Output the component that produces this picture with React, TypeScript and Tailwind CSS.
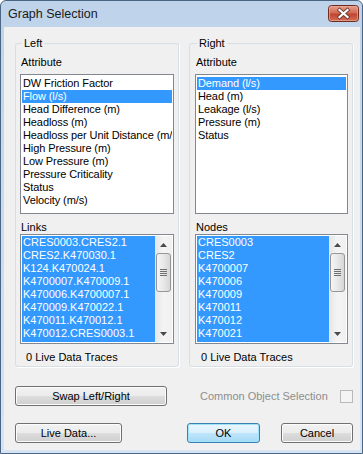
const font = "font-['Liberation_Sans',Arial,sans-serif]";

const leftAttributes = [
  'DW Friction Factor',
  'Flow (l/s)',
  'Head Difference (m)',
  'Headloss (m)',
  'Headloss per Unit Distance (m/s)',
  'High Pressure (m)',
  'Low Pressure (m)',
  'Pressure Criticality',
  'Status',
  'Velocity (m/s)',
];

const rightAttributes = ['Demand (l/s)', 'Head (m)', 'Leakage (l/s)', 'Pressure (m)', 'Status'];

const links = [
  'CRES0003.CRES2.1',
  'CRES2.K470030.1',
  'K124.K470024.1',
  'K4700007.K470009.1',
  'K470006.K4700007.1',
  'K470009.K470022.1',
  'K470011.K470012.1',
  'K470012.CRES0003.1',
];

const nodes = ['CRES0003', 'CRES2', 'K4700007', 'K470006', 'K470009', 'K470011', 'K470012', 'K470021'];

function AttributeList({ items, selected }: { items: string[]; selected: number }) {
  return (
    <div className="h-[140px] overflow-hidden border border-[#828790] bg-white p-[1px]">
      <div className="pt-[1px]">
        {items.map((item, i) => (
          <div
            key={item}
            className={`h-[13px] overflow-hidden whitespace-nowrap pl-[1px] leading-[13px] tracking-[-0.1px] ${
              i === selected ? 'bg-[#3399ff] text-white' : 'text-black'
            }`}
          >
            {item}
          </div>
        ))}
      </div>
    </div>
  );
}

function Arrow({ up }: { up?: boolean }) {
  return (
    <div className="flex h-[17px] items-center justify-center">
      <svg width="7" height="4" viewBox="0 0 7 4">
        <polygon points={up ? '3.5,0 7,4 0,4' : '0,0 7,0 3.5,4'} fill="#4a4a4a" />
      </svg>
    </div>
  );
}

function ScrollBar() {
  return (
    <div className="flex w-[17px] flex-col bg-linear-to-r from-[#e6e6e6] via-[#f4f4f4] to-[#f0f0f0]">
      <Arrow up />
      <div className="mx-[1px] flex h-[39px] flex-col items-center justify-center gap-[1px] rounded-[3px] border border-[#979797] bg-linear-to-r from-[#f5f5f5] via-[#e8e8e8] to-[#d6d6d6]">
        {[0, 1, 2, 3].map((i) => (
          <div key={i} className="h-[1px] w-[7px] bg-[#6f6f6f]" />
        ))}
      </div>
      <div className="flex-1" />
      <Arrow />
    </div>
  );
}

function SelectedList({ items }: { items: string[] }) {
  return (
    <div className="flex h-[110px] overflow-hidden border border-[#828790] bg-white p-[1px]">
      <div className="flex-1 overflow-hidden bg-[#3399ff] text-white">
        {items.map((item) => (
          <div key={item} className="h-[13px] whitespace-nowrap pl-[1px] leading-[13px]">
            {item}
          </div>
        ))}
      </div>
      <ScrollBar />
    </div>
  );
}

function Group(props: {
  title: string;
  attributes: string[];
  selected: number;
  objectLabel: string;
  objects: string[];
  pad: string;
}) {
  return (
    <fieldset className={`min-w-0 rounded-[3px] border border-[#d5dfe5] pb-[2px] shadow-[1px_1px_0_#ffffff] ${props.pad}`}>
      <legend className="ml-[2px] px-[2px] leading-[13px]">{props.title}</legend>
      <div className="pl-[1px] pt-[6px] leading-[13px]">Attribute</div>
      <div className="mt-[5px]">
        <AttributeList items={props.attributes} selected={props.selected} />
      </div>
      <div className="mt-[7px] pl-[1px] leading-[13px]">{props.objectLabel}</div>
      <SelectedList items={props.objects} />
      <div className="mt-[7px] pl-[6px] leading-[13px]">0 Live Data Traces</div>
    </fieldset>
  );
}

function Button({ label, width, primary }: { label: string; width: string; primary?: boolean }) {
  return (
    <button
      className={`h-[20px] ${width} rounded-[3px] border text-[11px] leading-[18px] text-black ${
        primary
          ? 'border-[#3c7fb1] bg-[linear-gradient(to_bottom,#eaf6fd,#d9f0fc_50%,#bee6fd_51%,#a7d9f5)] shadow-[inset_0_0_0_1px_#9fe3fb]'
          : 'border-[#707070] bg-[linear-gradient(to_bottom,#f2f2f2,#ebebeb_50%,#dddddd_51%,#cfcfcf)] shadow-[inset_0_0_0_1px_#fcfcfc]'
      }`}
    >
      {label}
    </button>
  );
}

function CloseButton() {
  return (
    <svg className="mt-[4px] block" width="31" height="17" viewBox="0 0 31 17">
      <defs>
        <linearGradient id="closeFill" x1="0" y1="0" x2="0" y2="1">
          <stop offset="0" stopColor="#e7a493" />
          <stop offset="0.45" stopColor="#d36b56" />
          <stop offset="0.55" stopColor="#c1452e" />
          <stop offset="1" stopColor="#d3735c" />
        </linearGradient>
      </defs>
      <rect x="0.5" y="0.5" width="30" height="16" rx="3" fill="url(#closeFill)" stroke="#6f2b20" />
      <rect x="1.5" y="1.5" width="28" height="14" rx="2" fill="none" stroke="#eda897" strokeOpacity="0.7" />
      <path d="M11.5 5 L19.5 12 M19.5 5 L11.5 12" stroke="#6a3a32" strokeWidth="3.8" strokeLinecap="square" />
      <path d="M11.5 5 L19.5 12 M19.5 5 L11.5 12" stroke="#ffffff" strokeWidth="2.2" strokeLinecap="square" />
    </svg>
  );
}

export default function App() {
  return (
    <div
      className={`flex h-[454px] w-[363px] flex-col rounded-t-[6px] border border-[#4b6584] bg-linear-to-b from-[#bed3ea] to-[#d6e4f3] text-[11px] text-black ${font}`}
    >
      <div className="flex h-[26px] items-start justify-between pl-[7px] pr-[3px]">
        <span className="text-[12.5px] leading-[27px] text-[#1b1b1b]">Graph Selection</span>
        <CloseButton />
      </div>

      <div className="mb-[3px] ml-[3px] mr-[2px] flex flex-1 flex-col bg-[#f0f0f0] pb-[7px] pl-[11px] pr-[7px] pt-[10px]">
        <div className="grid grid-cols-[164px_164px] gap-x-[10px]">
          <Group
            title="Left"
            attributes={leftAttributes}
            selected={1}
            objectLabel="Links"
            objects={links}
            pad="px-[4px]"
          />
          <Group
            title="Right"
            attributes={rightAttributes}
            selected={0}
            objectLabel="Nodes"
            objects={nodes}
            pad="pl-[5px] pr-[4px]"
          />
        </div>

        <div className="mt-[19px] flex h-[20px] items-center">
          <Button label="Swap Left/Right" width="w-[152px]" />
          <span className="ml-[33px] text-[#8d8d8d]">Common Object Selection</span>
          <div className="ml-auto h-[13px] w-[13px] border border-[#b9b9b9] bg-[#f4f4f4]" />
        </div>

        <div className="mt-[17px] flex h-[20px]">
          <Button label="Live Data..." width="w-[107px]" />
          <div className="ml-[65px]">
            <Button label="OK" width="w-[73px]" primary />
          </div>
          <div className="ml-[21px]">
            <Button label="Cancel" width="w-[72px]" />
          </div>
        </div>
      </div>
    </div>
  );
}
